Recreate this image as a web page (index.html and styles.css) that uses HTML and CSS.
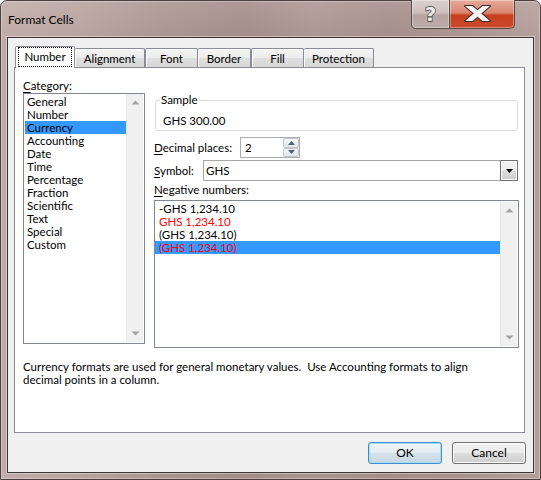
FILE: index.html
```html
<!DOCTYPE html>
<html>
<head>
<meta charset="utf-8">
<title>Format Cells</title>
<link rel="stylesheet" href="styles.css">
</head>
<body>
<div class="window">
  <div class="titlebar">
    <div class="title">Format Cells</div>
    <div class="caption">
      <div class="cap-btn help">
        <svg width="37" height="27" viewBox="0 0 37 27"><text x="18.5" y="21" text-anchor="middle" class="qmark">?</text></svg>
      </div>
      <div class="cap-btn close">
        <svg width="63" height="27" viewBox="0 0 63 27">
          <g class="x-outline"><polygon points="15,6 22.5,6 40,21 32.5,21"/><polygon points="32.5,6 40,6 22.5,21 15,21"/></g>
          <g class="x-fill"><polygon points="15,6 22.5,6 40,21 32.5,21"/><polygon points="32.5,6 40,6 22.5,21 15,21"/></g>
        </svg>
      </div>
    </div>
  </div>

  <div class="client">
    <div class="tabs">
      <div class="tab active w-number"><span class="focus">Number</span></div>
      <div class="tab w-alignment">Alignment</div>
      <div class="tab w-font">Font</div>
      <div class="tab w-border">Border</div>
      <div class="tab w-fill">Fill</div>
      <div class="tab w-protection">Protection</div>
    </div>

    <div class="panel">
      <div class="cols">
        <div class="col-left">
          <div class="label"><u>C</u>ategory:</div>
          <div class="listbox cat">
            <ul class="items">
              <li>General</li>
              <li>Number</li>
              <li class="sel">Currency</li>
              <li>Accounting</li>
              <li>Date</li>
              <li>Time</li>
              <li>Percentage</li>
              <li>Fraction</li>
              <li>Scientific</li>
              <li>Text</li>
              <li>Special</li>
              <li>Custom</li>
            </ul>
            <div class="vscroll">
              <div class="sb-arrow"><svg width="9" height="5" viewBox="0 0 9 5"><polygon points="4.5,0.5 8.5,4.5 0.5,4.5"/></svg></div>
              <div class="sb-arrow"><svg width="9" height="5" viewBox="0 0 9 5"><polygon points="0.5,0.5 8.5,0.5 4.5,4.5"/></svg></div>
            </div>
          </div>
        </div>

        <div class="col-right">
          <div class="sample">
            <div class="legend">Sample</div>
            <div class="sample-value">GHS 300.00</div>
          </div>

          <div class="field-row dec-row">
            <div class="label lbl-dec"><u>D</u>ecimal places:</div>
            <div class="spin-input">
              <span class="spin-text">2</span>
              <div class="spinner">
                <div class="spin-btn"><svg width="7" height="4" viewBox="0 0 7 4"><polygon points="3.5,0 7,4 0,4"/></svg></div>
                <div class="spin-btn"><svg width="7" height="4" viewBox="0 0 7 4"><polygon points="0,0 7,0 3.5,4"/></svg></div>
              </div>
            </div>
          </div>

          <div class="field-row sym-row">
            <div class="label lbl-sym"><u>S</u>ymbol:</div>
            <div class="combo">
              <span class="combo-text">GHS</span>
              <div class="combo-btn"><svg width="7" height="4" viewBox="0 0 7 4"><polygon points="0,0 7,0 3.5,4"/></svg></div>
            </div>
          </div>

          <div class="label neg-label"><u>N</u>egative numbers:</div>
          <div class="listbox neg">
            <ul class="items">
              <li>-GHS 1,234.10</li>
              <li class="red">GHS 1,234.10</li>
              <li>(GHS 1,234.10)</li>
              <li class="red sel">(GHS 1,234.10)</li>
            </ul>
            <div class="vscroll">
              <div class="sb-arrow"><svg width="9" height="5" viewBox="0 0 9 5"><polygon points="4.5,0.5 8.5,4.5 0.5,4.5"/></svg></div>
              <div class="sb-arrow"><svg width="9" height="5" viewBox="0 0 9 5"><polygon points="0.5,0.5 8.5,0.5 4.5,4.5"/></svg></div>
            </div>
          </div>
        </div>
      </div>

      <p class="desc">Currency formats are used for general monetary values.&nbsp; Use Accounting formats to align<br>decimal points in a column.</p>
    </div>

    <div class="actions">
      <button class="btn default">OK</button>
      <button class="btn">Cancel</button>
    </div>
  </div>
</div>
</body>
</html>
```

FILE: styles.css
```css
* { box-sizing: border-box; }
html, body { margin: 0; padding: 0; }
body {
  width: 541px;
  height: 480px;
  overflow: hidden;
  font-family: Lato, "Liberation Sans", sans-serif;
  font-size: 11.5px;
  color: #000;
  background: #fff;
}

.window {
  width: 541px;
  height: 480px;
  display: flex;
  flex-direction: column;
  padding: 0 6px 6px;
  border: 1px solid #4e3f3c;
  border-radius: 7px 7px 0 0;
  background:
    linear-gradient(180deg, rgba(255,255,255,0.12), rgba(255,255,255,0) 40px),
    linear-gradient(90deg, #c0aca8 0%, #b7a29e 15%, #a99490 30%, #a28b87 45%, #ab9591 58%, #a48d89 72%, #a9928e 85%, #b39e9a 100%);
  box-shadow: inset 0 0 0 1px rgba(255,255,255,0.3);
}

.titlebar {
  height: 36px;
  flex: none;
  display: flex;
}
.title {
  padding: 12px 0 0 1px;
  line-height: 14px;
  font-size: 12px;
  color: #000;
}
.caption {
  display: flex;
  margin: -1px 19px 0 auto;
  height: 29px;
}
.cap-btn {
  height: 29px;
  border: 1px solid #5a4a47;
  border-top: none;
  box-shadow: inset 0 0 0 1px rgba(255,255,255,0.35);
}
.help {
  width: 39px;
  border-radius: 0 0 0 5px;
  background: linear-gradient(180deg, #dcd1cf 0%, #cdbfbc 45%, #b6a4a1 55%, #bcaba8 100%);
}
.close {
  width: 65px;
  border-left: none;
  border-radius: 0 0 5px 0;
  background: linear-gradient(180deg, #e6aa9a 0%, #d98770 45%, #c6401f 55%, #cb4a2c 100%);
}
.cap-btn svg { display: block; }
.qmark {
  font-family: "DejaVu Sans", sans-serif;
  font-weight: bold;
  font-size: 20px;
  fill: #ececec;
  stroke: #3b3533;
  stroke-width: 1.3px;
  paint-order: stroke;
}
.x-outline polygon { fill: none; stroke: #3d2a26; stroke-width: 2; stroke-linejoin: round; }
.x-fill polygon { fill: #f6f6f6; }

.client {
  flex: 1;
  display: flex;
  flex-direction: column;
  padding-top: 8px;
  background: #f0f0f0;
  border: 1px solid #3e3432;
  box-shadow: 0 0 0 1px rgba(255,255,255,0.4);
}

/* Tabs */
.tabs {
  display: flex;
  align-items: flex-end;
  height: 21px;
  margin-left: 7px;
  flex: none;
}
.tab {
  height: 19px;
  padding-top: 1px;
  line-height: 17px;
  text-align: center;
  border: 1px solid #898c95;
  border-bottom: none;
  border-radius: 2px 2px 0 0;
  background: linear-gradient(180deg, #f5f5f5 0%, #ebebeb 50%, #dedede 51%, #d8d8d8 100%);
  box-shadow: inset 1px 1px 0 #fbfbfb;
}
.tab.active {
  height: 22px;
  padding-top: 0;
  margin-bottom: -1px;
  background: #fff;
  box-shadow: none;
  position: relative;
  z-index: 1;
}
.focus {
  display: block;
  margin: 0 2px;
  border: 1px dotted #000;
  line-height: 18px;
}
.w-number { width: 60px; }
.w-alignment { width: 70px; border-left: none; }
.w-font { width: 53px; }
.w-border { width: 53px; border-left: none; }
.w-fill { width: 53px; }
.w-protection { width: 70px; border-left: none; }

/* Panel */
.panel {
  flex: none;
  height: 366px;
  margin: 0 8px 0 6px;
  padding: 11px 5px 0 8px;
  background: #fff;
  border: 1px solid #898c95;
}
.cols {
  display: flex;
  gap: 9px;
}
.col-left { width: 122px; }
.col-right { width: 365px; }
.label {
  line-height: 14px;
  height: 14px;
  white-space: nowrap;
}
.label u { text-decoration-thickness: 1px; text-underline-offset: 2px; }

.listbox {
  display: flex;
  border: 1px solid #828790;
  background: #fff;
}
.items {
  flex: 1;
  margin: 0;
  padding: 1px 0 0 0;
  list-style: none;
}
.items li {
  line-height: 13px;
  height: 13px;
  white-space: nowrap;
}
.items li.sel { background: #3399ff; }
.items li.red { color: #ff0000; }

.cat { height: 251px; }
.cat .items { padding-left: 1px; }
.cat .items li { padding-left: 2px; }
.neg { height: 148px; margin-top: 3px; }
.neg .items li { padding-left: 4px; }

.vscroll {
  width: 17px;
  margin: 1px 1px 1px 0;
  display: flex;
  flex-direction: column;
  justify-content: space-between;
  background: #f0f0f0;
  border-left: 1px solid #e8e8e8;
}
.cat .vscroll { margin-top: 0; }
.sb-arrow {
  height: 17px;
  display: flex;
  align-items: center;
  justify-content: center;
}
.sb-arrow svg { display: block; fill: #a2a2a2; }

/* Sample group */
.sample {
  margin: 21px 1px 0;
  height: 31px;
  border: 1px solid #dcdcdc;
  border-radius: 3px;
}
.legend {
  width: fit-content;
  margin: -8px 0 0 4px;
  padding: 0 1px;
  background: #fff;
  line-height: 14px;
}
.sample-value {
  margin-top: 7px;
  padding-left: 7px;
  line-height: 14px;
}

/* Field rows */
.field-row {
  display: flex;
  align-items: center;
}
.dec-row { margin-top: 6px; }
.sym-row { margin-top: 2px; }
.lbl-dec { width: 86px; }
.lbl-sym { width: 49px; }

.spin-input {
  width: 60px;
  height: 21px;
  display: flex;
  align-items: center;
  border: 1px solid #abadb3;
  background: #fff;
}
.spin-text {
  flex: 1;
  padding-left: 4px;
  line-height: 14px;
}
.spinner {
  width: 16px;
  height: 19px;
  display: flex;
  flex-direction: column;
}
.spin-btn {
  flex: 1;
  display: flex;
  align-items: center;
  justify-content: center;
  border: 1px solid #c2c6ce;
  border-radius: 2px;
  background: linear-gradient(180deg, #f7f7f7, #e3e5ea);
}
.spin-btn svg { display: block; fill: #4d6185; }

.combo {
  width: 315px;
  height: 21px;
  display: flex;
  align-items: center;
  border: 1px solid #a7a7a7;
  background: #fff;
}
.combo-text {
  flex: 1;
  padding-left: 2px;
  line-height: 14px;
}
.combo-btn {
  width: 18px;
  align-self: stretch;
  margin: -1px -1px -1px 0;
  display: flex;
  align-items: center;
  justify-content: center;
  border: 1px solid #707070;
  background: linear-gradient(180deg, #f2f2f2 0%, #ebebeb 50%, #dddddd 51%, #cfcfcf 100%);
  box-shadow: inset 0 0 0 1px #fbfbfb;
}
.combo-btn svg { display: block; fill: #000; }

.neg-label { margin-top: 2px; }

.desc {
  margin: 12px 0 0;
  line-height: 13px;
  white-space: nowrap;
}

/* Dialog buttons */
.actions {
  display: flex;
  justify-content: flex-end;
  gap: 10px;
  margin: 9px 7px 0 0;
  flex: none;
}
.btn {
  width: 74px;
  height: 22px;
  padding: 0;
  font: inherit;
  font-size: 12px;
  color: #000;
  text-align: center;
  line-height: 20px;
  border: 1px solid #707070;
  border-radius: 3px;
  background: linear-gradient(180deg, #f2f2f2 0%, #ebebeb 50%, #dddddd 51%, #cfcfcf 100%);
  box-shadow: inset 0 0 0 1px #fcfcfc;
}
.btn.default {
  border-color: #3c8ed0;
  box-shadow: inset 0 0 0 1px #a6dcf5;
  background: linear-gradient(180deg, #eef4f8 0%, #e4ecf2 50%, #d5e1ea 51%, #c9d7e2 100%);
}
```
